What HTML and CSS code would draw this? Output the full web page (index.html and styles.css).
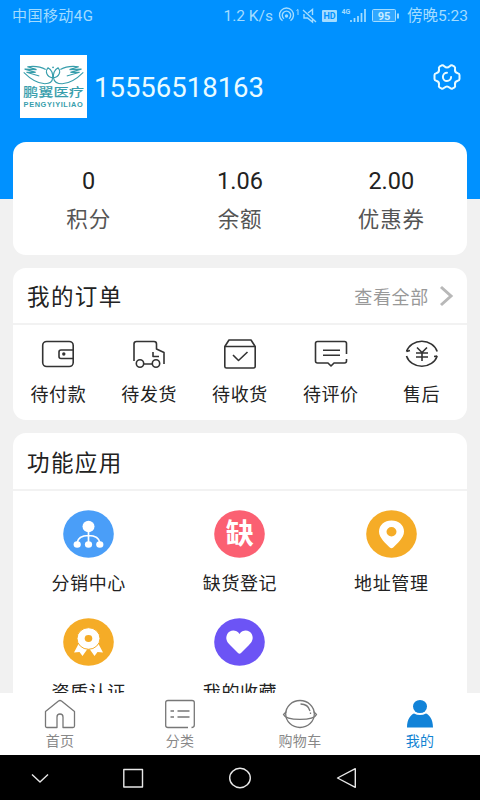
FILE: index.html
```html
<!DOCTYPE html>
<html lang="zh-CN">
<head>
<meta charset="utf-8">
<title>我的</title>
<link rel="stylesheet" href="styles.css">
</head>
<body>
<div class="screen">
  <main class="content">
    <header class="hero">
      <div class="status">
        <span class="carrier">中国移动4G</span>
        <span class="speed">1.2 K/s</span>
        <svg class="status-icons" width="128" height="20" viewBox="0 0 128 20" fill="none" stroke="currentColor" stroke-width="1.4">
          <path d="M4.500 14.800A7 7 0 1 1 12.500 14.800M6 12.700A4.200 4.200 0 1 1 11 12.700"/>
          <circle cx="8.500" cy="10" r="1.700" fill="currentColor" stroke="none"/>
          <path d="M18.500 4.500l1.500-1v5.500" stroke-width="1"/>
          <path d="M25 4l13 12M26 8v4h3.500l5 4V13M30 7l4.500-3.500V9"/>
          <rect x="44" y="4" width="15" height="12" rx="1" fill="currentColor" stroke="none"/>
          <text class="hd" x="51.500" y="13.400">HD</text>
          <text class="net" x="63.500" y="8">4G</text>
          <path d="M73 16v-2M76.500 16v-4M80 16V10M83.500 16V7M87 16V3" stroke-width="1.700"/>
          <rect x="94.500" y="3.500" width="23" height="12" rx="1" fill="currentColor" fill-opacity=".3" stroke-width="1"/>
          <path d="M120 7.500v5" stroke-width="2"/>
          <text class="battery" x="106" y="13.500">95</text>
        </svg>
        <span class="time">傍晚5:23</span>
      </div>
      <div class="profile">
        <div class="avatar">
          <svg width="67" height="24" viewBox="0 0 67 24" fill="none" stroke="#389eac" stroke-width="1.200">
            <path d="M1 8C7 14 15 20 24 20.500C30 20.500 32.500 18 32.500 14C26 13 24 7 27.500 3C31 5 33 9 32.500 14M66 8C60 14 52 20 43 20.500C37 20.500 34 18 33.500 14C40 13 42 7 38.500 3C35 5 33 9 33.500 14"/>
            <path d="M25 5C18 1 12 1 5 2L15 5L2 4.500L14 8L4 8L18 12M41 5C48 1 54 1 61 2L51 5L64 4.500L52 8L62 8L48 12"/>
            <circle cx="33" cy="2.500" r="1" fill="#389eac" stroke="none"/>
          </svg>
          <span class="brand">鹏翼医疗</span>
          <span class="brand-latin">PENGYIYILIAO</span>
        </div>
        <span class="phone">15556518163</span>
        <svg class="gear" width="28" height="28" viewBox="0 0 28 28" fill="none" stroke="currentColor" stroke-width="2" stroke-linejoin="round" stroke-linecap="round">
          <path d="M8.500 2.500Q10 1.800 11.300 3.300Q14 5.800 16.700 3.300Q18 1.800 19.500 2.500L21.500 3.700Q22.500 4.500 22 6.200Q21.500 9.500 24.800 10.200Q26.500 10.500 26.500 12V16Q26.500 17.500 24.800 17.800Q21.500 18.500 22 21.800Q22.500 23.500 21.500 24.300L19.500 25.500Q18 26.200 16.700 24.700Q14 22.200 11.300 24.700Q10 26.200 8.500 25.500L6.500 24.300Q5.500 23.500 6 21.800Q6.500 18.500 3.200 17.800Q1.500 17.500 1.500 16V12Q1.500 10.500 3.200 10.200Q6.500 9.500 6 6.200Q5.500 4.500 6.500 3.700Z"/>
          <path d="M14 9.800A4.100 4.100 0 1 0 18.100 14"/>
        </svg>
      </div>
    </header>

    <section class="card stats">
      <div class="stat"><b>0</b><span>积分</span></div>
      <div class="stat"><b>1.06</b><span>余额</span></div>
      <div class="stat"><b>2.00</b><span>优惠券</span></div>
    </section>

    <section class="card orders">
      <div class="card-head">
        <h2>我的订单</h2>
        <a class="more">查看全部
          <svg width="16" height="22" viewBox="0 0 16 22" fill="none" stroke="#b8b8b8" stroke-width="3"><path d="M3 2L13 11L3 20"/></svg>
        </a>
      </div>
      <div class="order-row">
        <div class="order">
          <svg width="34" height="32" viewBox="0 0 34 32"><rect x="1.700" y="3.500" width="30.500" height="25" rx="4"/><path d="M32 12H20Q18 12 18 14V18.500Q18 20.500 20 20.500H32"/><circle cx="22.800" cy="16" r="1.700" class="dot"/></svg>
          <span>待付款</span>
        </div>
        <div class="order">
          <svg width="34" height="32" viewBox="0 0 34 32"><path d="M2 23V6Q2 3.500 4.500 3.500H22Q24.500 3.500 24.500 6V11L32 14.500V26M21 14V18.500H27M12 26H20"/><circle cx="8" cy="25.500" r="3.700"/><circle cx="24" cy="25.500" r="3.700"/></svg>
          <span>待发货</span>
        </div>
        <div class="order">
          <svg width="34" height="32" viewBox="0 0 34 32"><path d="M1.800 8.500L6 2H28L32.200 8.500V28.500Q32.200 30 30.500 30H3.500Q1.800 30 1.800 28.500ZM1.800 8.500H32.200M10 17L15.500 22.500L24.500 14"/></svg>
          <span>待收货</span>
        </div>
        <div class="order">
          <svg width="34" height="32" viewBox="0 0 34 32"><path d="M32.500 16V5.500Q32.500 3.500 30.500 3.500H3.500Q1.500 3.500 1.500 5.500V23Q1.500 25 3.500 25H14L17 28L20 25H30.500Q32.500 25 32.500 23V21M9 12.200H26M9 17.300H26"/></svg>
          <span>待评价</span>
        </div>
        <div class="order">
          <svg width="34" height="32" viewBox="0 0 34 32"><path d="M1.500 13.500A16 14.300 0 0 1 32.200 13.500M1.500 18A16 14.300 0 0 0 32.200 18M1.500 13.500L5 12.500M32.200 18L29 18.500M12 9.500L17 14.500L22 9.500M11 15H23M11 19H23M17 14.500V23"/></svg>
          <span>售后</span>
        </div>
      </div>
    </section>

    <section class="card features">
      <div class="card-head">
        <h2>功能应用</h2>
      </div>
      <div class="feature-grid">
        <div class="feature">
          <svg width="51" height="48" viewBox="0 0 51 48"><ellipse cx="25.500" cy="24" rx="25.300" ry="23.700" fill="#4a9ef8"/><g fill="#fff"><ellipse cx="25.500" cy="16.500" rx="6" ry="5.700"/><ellipse cx="14.200" cy="34.500" rx="3.600" ry="3.300"/><ellipse cx="25.500" cy="34.500" rx="3.600" ry="3.300"/><ellipse cx="36.800" cy="34.500" rx="3.600" ry="3.300"/></g><path d="M25.500 20V33M14 33C15 27 20 25.500 25.500 25.500S36 27 37 33" fill="none" stroke="#fff" stroke-width="1.700"/></svg>
          <span>分销中心</span>
        </div>
        <div class="feature">
          <svg width="51" height="48" viewBox="0 0 51 48"><ellipse cx="25.500" cy="24" rx="25.300" ry="23.700" fill="#fb6072"/><text class="glyph" x="25.800" y="34">缺</text></svg>
          <span>缺货登记</span>
        </div>
        <div class="feature">
          <svg width="51" height="48" viewBox="0 0 51 48"><ellipse cx="25.500" cy="24" rx="25.300" ry="23.700" fill="#f5ac27"/><path fill="#fff" fill-rule="evenodd" d="M25.500 10.500C18.500 10.500 13 15 13 21.500C13 28 20 33.500 23.800 37.500Q25.500 39 27.200 37.500C31 33.500 38 28 38 21.500C38 15 32.500 10.500 25.500 10.500ZM25.500 17A5 4.700 0 1 1 25.500 26.400A5 4.700 0 1 1 25.500 17Z"/></svg>
          <span>地址管理</span>
        </div>
        <div class="feature">
          <svg width="51" height="48" viewBox="0 0 51 48"><ellipse cx="25.500" cy="24" rx="25.300" ry="23.700" fill="#f5ac27"/><path fill="#fff" d="M15.500 26L11 34.500L16.500 34L19.500 38L25.500 29.500L31.500 38L34.500 34L40 34.500L35.500 26Z"/><ellipse cx="25.500" cy="20.500" rx="11.500" ry="10.800" fill="#fff" stroke="#f5ac27"/><ellipse cx="25.500" cy="20.500" rx="3.800" ry="3.400" fill="#f5ac27"/></svg>
          <span>资质认证</span>
        </div>
        <div class="feature">
          <svg width="51" height="48" viewBox="0 0 51 48"><ellipse cx="25.500" cy="24" rx="25.300" ry="23.700" fill="#6c54f5"/><path fill="#fff" d="M25.500 16C22 11 15.500 12 13.300 16C11 20.500 13 24 16 27L24 35Q25.500 36.500 27 35L35 27C38 24 40 20.500 37.700 16C35.500 12 29 11 25.500 16Z"/></svg>
          <span>我的收藏</span>
        </div>
      </div>
    </section>
  </main>

  <nav class="tabs">
    <a class="tab">
      <svg width="36" height="30" viewBox="0 0 36 30"><path d="M15 28.500H5Q3.500 28.500 3.500 27V12.500L16.500 2Q18 1 19.500 2L32.500 12.500V27Q32.500 28.500 31 28.500H21V18Q21 15 18 15T15 18Z"/></svg>
      <span>首页</span>
    </a>
    <a class="tab">
      <svg width="36" height="30" viewBox="0 0 36 30"><path d="M26 28.500H6Q3.700 28.500 3.700 26.500V3.500Q3.700 1.500 6 1.500H30Q32.300 1.500 32.300 3.500V26Q32.300 28.500 29.500 28.500M8.500 12H12M15.500 12H27.500M8.500 18H12M15.500 18H27.500"/></svg>
      <span>分类</span>
    </a>
    <a class="tab">
      <svg width="36" height="30" viewBox="0 0 36 30"><ellipse cx="18" cy="15" rx="14.300" ry="13.500"/><path d="M4.500 12.500L1.500 15.500C4 22 32 22 34.500 15.500L31.500 12.500M18.500 5C24 5 27 8 28 12M28.500 13.500V15"/></svg>
      <span>购物车</span>
    </a>
    <a class="tab active">
      <svg width="36" height="30" viewBox="0 0 36 30"><ellipse cx="18" cy="7.500" rx="7" ry="6.600"/><path d="M5 28.500C5 20 9 15.500 12 14.500Q18 17.500 24 14.500C27 15.500 31 20 31 28.500Z"/></svg>
      <span>我的</span>
    </a>
  </nav>

  <div class="system">
    <svg viewBox="0 0 24 24"><path d="M4 8.500L12 16L20 8.500"/></svg>
    <svg viewBox="0 0 24 24"><rect x="2.800" y="3.500" width="18.700" height="17.500"/></svg>
    <svg viewBox="0 0 24 24"><ellipse cx="12" cy="12" rx="10.300" ry="9.700"/></svg>
    <svg viewBox="0 0 24 24"><path d="M20.300 2.700V21.300L2.500 12Z"/></svg>
  </div>
</div>
</body>
</html>
```
FILE: styles.css
```css
* { box-sizing: border-box; }

body {
  margin: 0;
  font-family: Roboto, "Noto Sans CJK SC", sans-serif;
  color: #222;
}

svg { display: block; flex: none; }

.screen {
  width: 480px;
  height: 800px;
  display: flex;
  flex-direction: column;
  overflow: hidden;
}

.content {
  height: 693px;
  flex: none;
  overflow: hidden;
  background: #f1f1f1;
}

.hero {
  height: 199px;
  background: #0091ff;
}

.status {
  height: 31px;
  padding: 0 10px 0 12px;
  display: flex;
  align-items: center;
  font-size: 15.5px;
  line-height: 31px;
  color: #a3dcff;
}

.carrier { flex: 1; font-size: 15px; letter-spacing: .45px; padding-top: 1px; }
.speed { margin-right: 5px; padding-top: 1px; }
.status-icons { margin-right: 1px; }
.time { width: 63px; padding-top: 1px; white-space: nowrap; }

.hd { font: bold 9px Roboto; fill: #0091ff; stroke: none; text-anchor: middle; }
.net { font: bold 7px Roboto; fill: currentColor; stroke: none; }
.battery { font: bold 11px Roboto; fill: #c8ecff; stroke: none; text-anchor: middle; }

.profile {
  padding: 24px 19px 0 20px;
  display: flex;
  color: #e9fbff;
}

.avatar {
  width: 67px;
  height: 63px;
  padding-top: 10px;
  display: flex;
  flex-direction: column;
  align-items: center;
  background: #fff;
  color: #389eac;
}

.avatar svg { height: 22px; }

.brand {
  font-size: 15.3px;
  line-height: 13px;
  font-weight: 500;
  white-space: nowrap;
  transform: scaleY(.8);
}

.brand-latin {
  margin-top: 1px;
  font: bold 7.4px/7px "Liberation Sans", sans-serif;
  letter-spacing: .6px;
  transform: scaleY(.85);
}

.phone {
  flex: 1;
  margin-left: 7px;
  font-size: 27.5px;
  line-height: 65px;
}

.gear { margin-top: 8px; }

.card {
  margin: 0 13px 13px;
  border-radius: 13px;
  background: #fff;
}

.stats {
  height: 113px;
  margin-top: -57px;
  padding-top: 24px;
  display: grid;
  grid-template-columns: repeat(3, 1fr);
}

.stat {
  display: flex;
  flex-direction: column;
  align-items: center;
}

.stat b {
  font-size: 23.5px;
  line-height: 30px;
  font-weight: 400;
}

.stat span {
  margin-top: 8px;
  font-size: 21.5px;
  line-height: 32px;
  letter-spacing: .8px;
  color: #555;
}

.orders { height: 152px; }

.card-head {
  height: 57px;
  padding: 0 13px 0 14px;
  display: flex;
  align-items: center;
  justify-content: space-between;
  border-bottom: 2px solid #f2f2f2;
}

.card-head h2 {
  margin: 0;
  padding-top: 3px;
  font-size: 22.5px;
  line-height: 32px;
  letter-spacing: 1.4px;
  font-weight: 400;
}

.more {
  display: flex;
  align-items: center;
  gap: 9px;
  font-size: 18px;
  letter-spacing: .7px;
  color: #999;
}

.order-row {
  padding-top: 13px;
  display: grid;
  grid-template-columns: repeat(5, 1fr);
}

.order {
  display: flex;
  flex-direction: column;
  align-items: center;
  gap: 12px;
  font-size: 18px;
  line-height: 26px;
  letter-spacing: .6px;
}

.order svg {
  fill: none;
  stroke: #333;
  stroke-width: 1.6;
  stroke-linejoin: round;
}

.order .dot { fill: #333; stroke: none; }

.features { height: 320px; }
.features .card-head { height: 58px; }

.feature-grid {
  padding-top: 19px;
  display: grid;
  grid-template-columns: repeat(3, 1fr);
  row-gap: 21px;
}

.feature {
  display: flex;
  flex-direction: column;
  align-items: center;
  gap: 12px;
  font-size: 18px;
  line-height: 27px;
  letter-spacing: .6px;
}

.feature:nth-child(n+4) { gap: 13px; }

.glyph {
  font: bold 28px "Noto Sans CJK SC";
  letter-spacing: 0;
  fill: #fff;
  text-anchor: middle;
}

.tabs {
  height: 62px;
  flex: none;
  padding-top: 6px;
  display: grid;
  grid-template-columns: repeat(4, 1fr);
  background: #fff;
}

.tab {
  display: flex;
  flex-direction: column;
  align-items: center;
  gap: 2px;
  font-size: 14px;
  line-height: 21px;
  letter-spacing: .3px;
  color: #888;
}

.tab svg {
  fill: none;
  stroke: #777;
  stroke-width: 1.3;
  stroke-linejoin: round;
}

.tab.active { color: #1283d2; }
.tab.active svg { fill: #1283d8; stroke: none; }

.system {
  height: 45px;
  flex: none;
  display: grid;
  grid-template-columns: 80px 106px 107px 107px;
  align-items: center;
  justify-items: center;
  background: #000;
}

.system svg {
  width: 24px;
  height: 24px;
  fill: none;
  stroke: #e8e8e8;
  stroke-width: 1.4;
  stroke-linejoin: round;
}
```
